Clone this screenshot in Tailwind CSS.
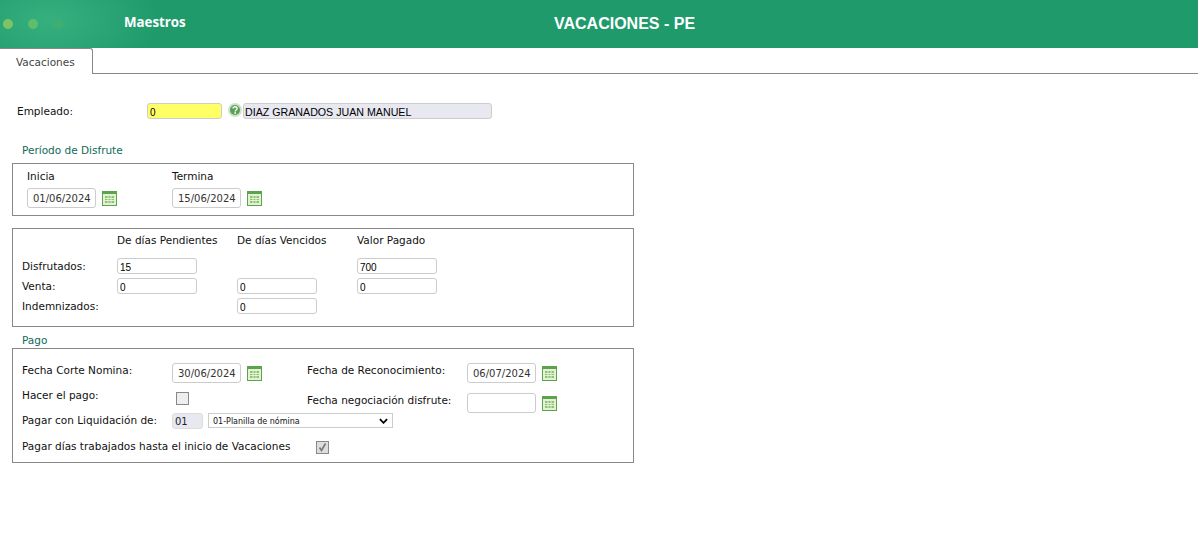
<!DOCTYPE html>
<html lang="es">
<head>
  <meta charset="UTF-8">
  <title>Vacaciones - PE</title>
  <script src="https://cdn.jsdelivr.net/npm/@tailwindcss/browser@4"></script>
</head>
<body class="bg-white h-[538px] overflow-hidden font-['DejaVu_Sans',sans-serif] text-[10.5px] text-[#111]">

  <!-- encabezado -->
  <div class="relative h-12 bg-[#1f9a6b] bg-[radial-gradient(ellipse_110px_60px_at_50px_20px,#37b07f,#1f9a6b)] flex items-center">
    <div class="flex gap-[15px] pl-[3px] w-[124px] -mt-[1px]">
      <span class="w-[10px] h-[10px] rounded-full bg-[#7cc465]"></span>
      <span class="w-[10px] h-[10px] rounded-full bg-[#5fbd6c]"></span>
      <span class="w-[10px] h-[10px] rounded-full bg-[#3fae70]"></span>
    </div>
    <span class="font-['Open_Sans',sans-serif] font-bold text-[13.3px] text-white -mt-[3px]">Maestros</span>
    <span class="absolute left-[554px] top-[14px] font-['Liberation_Sans',sans-serif] font-bold text-base leading-[19px] text-white">VACACIONES - PE</span>
  </div>

  <!-- pestañas -->
  <div class="h-[26px] border-b border-[#888]">
    <div class="w-[93px] h-[26px] bg-white border-t border-r border-[#888] rounded-tr-[3px] pl-4 pt-[6px] leading-[14px] text-[#444]">Vacaciones</div>
  </div>

  <form class="w-[634px] pl-3">
    <!-- empleado -->
    <div class="flex items-start h-[16px] mt-[29px] pl-[5px]">
      <span class="w-[130px] leading-[16px]">Empleado:</span>
      <input type="text" value="0" class="w-[75px] h-4 bg-[#ffff66] border border-[#ccc] rounded-[3px] px-[2px] pt-[2px] text-[10px] text-black font-['Liberation_Sans',sans-serif]">
      <span class="w-[14px] h-[14px] ml-[6px] mr-[1px]">
        <svg viewBox="0 0 14 14" class="w-[14px] h-[14px]"><circle cx="7" cy="7" r="7" fill="#cfe3ca"/><circle cx="7" cy="7" r="5" fill="#5a9f55"/><path d="M5 5.6C5 4.4 6 3.8 7 3.8s2.1.6 2.1 1.7c0 1.4-1.9 1.5-1.9 2.9" fill="none" stroke="#fff" stroke-width="1.4"/><rect x="6.4" y="9.2" width="1.6" height="1.6" fill="#fff"/></svg>
      </span>
      <input type="text" readonly value="DIAZ GRANADOS JUAN MANUEL" class="w-[249px] h-4 bg-[#e8e8f0] border border-[#ccc] rounded-[3px] px-[1px] pt-[2px] text-[10.67px] text-black font-['Liberation_Sans',sans-serif]">
    </div>

    <!-- período -->
    <div class="pl-[10px] mt-[24px] h-[20px] leading-[14px] text-[#0f6b58]">Período de Disfrute</div>
    <div class="h-[53px] border border-[#888] flex pl-[14px] pt-[5px]">
      <div class="w-[145px]">
        <div class="leading-[14px]">Inicia</div>
        <div class="flex items-center gap-[6px] mt-[5px]">
          <input type="text" value="01/06/2024" class="w-[69px] h-[20px] border border-[#ccc] rounded-[3px] pl-[5px] text-[10px] text-[#333]">
          <svg viewBox="0 0 15 15" class="w-[15px] h-[15px] mt-[1px]"><rect x="0.5" y="0.5" width="14" height="14" fill="#e3f2d5" stroke="#5da34e"/><rect x="1" y="1" width="13" height="2" fill="#5da34e"/><rect x="3" y="5" width="9" height="7" fill="#8fc46f"/><path d="M6 5v7M9 5v7M3 7.5h9M3 9.5h9" stroke="#f4faee" stroke-width="0.8"/></svg>
        </div>
      </div>
      <div>
        <div class="leading-[14px]">Termina</div>
        <div class="flex items-center gap-[6px] mt-[5px]">
          <input type="text" value="15/06/2024" class="w-[69px] h-[20px] border border-[#ccc] rounded-[3px] pl-[5px] text-[10px] text-[#333]">
          <svg viewBox="0 0 15 15" class="w-[15px] h-[15px] mt-[1px]"><rect x="0.5" y="0.5" width="14" height="14" fill="#e3f2d5" stroke="#5da34e"/><rect x="1" y="1" width="13" height="2" fill="#5da34e"/><rect x="3" y="5" width="9" height="7" fill="#8fc46f"/><path d="M6 5v7M9 5v7M3 7.5h9M3 9.5h9" stroke="#f4faee" stroke-width="0.8"/></svg>
        </div>
      </div>
    </div>

    <!-- días -->
    <div class="h-[99px] mt-[12px] border border-[#888] pl-[9px] pt-[5px] grid grid-cols-[95px_120px_120px_120px] grid-rows-[24px_20px_20px_20px] items-start leading-[14px]">
      <span></span><span class="-mt-[1px]">De días Pendientes</span><span class="-mt-[1px]">De días Vencidos</span><span class="-mt-[1px]">Valor Pagado</span>

      <span class="pt-[1px]">Disfrutados:</span>
      <input type="text" value="15" class="w-20 h-4 border border-[#ccc] rounded-[3px] pl-[2px] pt-[2px] text-[10px] font-['Liberation_Sans',sans-serif] text-black">
      <span></span>
      <input type="text" value="700" class="w-20 h-4 border border-[#ccc] rounded-[3px] pl-[2px] pt-[2px] text-[10px] font-['Liberation_Sans',sans-serif] text-black">

      <span class="pt-[1px]">Venta:</span>
      <input type="text" value="0" class="w-20 h-4 border border-[#ccc] rounded-[3px] pl-[2px] pt-[2px] text-[10px] font-['Liberation_Sans',sans-serif] text-black">
      <input type="text" value="0" class="w-20 h-4 border border-[#ccc] rounded-[3px] pl-[2px] pt-[2px] text-[10px] font-['Liberation_Sans',sans-serif] text-black">
      <input type="text" value="0" class="w-20 h-4 border border-[#ccc] rounded-[3px] pl-[2px] pt-[2px] text-[10px] font-['Liberation_Sans',sans-serif] text-black">

      <span class="pt-[1px]">Indemnizados:</span>
      <span></span>
      <input type="text" value="0" class="w-20 h-4 border border-[#ccc] rounded-[3px] pl-[2px] pt-[2px] text-[10px] font-['Liberation_Sans',sans-serif] text-black">
      <span></span>
    </div>

    <!-- pago -->
    <div class="pl-[10px] mt-[6px] h-[15px] leading-[14px] text-[#0f6b58]">Pago</div>
    <div class="h-[115px] border border-[#888] pl-[9px] pt-[14px] leading-[14px]">
      <div class="grid grid-cols-[150px_135px_160px_1fr] grid-rows-[30px_20px] items-start">
        <span>Fecha Corte Nomina:</span>
        <div class="flex items-center gap-[6px]">
          <input type="text" value="30/06/2024" class="w-[69px] h-[20px] border border-[#ccc] rounded-[3px] pl-[5px] text-[10px] text-[#333]">
          <svg viewBox="0 0 15 15" class="w-[15px] h-[15px] mt-[1px]"><rect x="0.5" y="0.5" width="14" height="14" fill="#e3f2d5" stroke="#5da34e"/><rect x="1" y="1" width="13" height="2" fill="#5da34e"/><rect x="3" y="5" width="9" height="7" fill="#8fc46f"/><path d="M6 5v7M9 5v7M3 7.5h9M3 9.5h9" stroke="#f4faee" stroke-width="0.8"/></svg>
        </div>
        <span>Fecha de Reconocimiento:</span>
        <div class="flex items-center gap-[6px]">
          <input type="text" value="06/07/2024" class="w-[69px] h-[20px] border border-[#ccc] rounded-[3px] pl-[5px] text-[10px] text-[#333]">
          <svg viewBox="0 0 15 15" class="w-[15px] h-[15px] mt-[1px]"><rect x="0.5" y="0.5" width="14" height="14" fill="#e3f2d5" stroke="#5da34e"/><rect x="1" y="1" width="13" height="2" fill="#5da34e"/><rect x="3" y="5" width="9" height="7" fill="#8fc46f"/><path d="M6 5v7M9 5v7M3 7.5h9M3 9.5h9" stroke="#f4faee" stroke-width="0.8"/></svg>
        </div>

        <span class="-mt-[5px]">Hacer el pago:</span>
        <div class="pl-1 -mt-[1px]"><input type="checkbox" class="block appearance-none w-[13px] h-[13px] border border-[#888] bg-[#eee]"></div>
        <span>Fecha negociación disfrute:</span>
        <div class="flex items-center gap-[6px]">
          <input type="text" class="w-[69px] h-[20px] border border-[#ccc] rounded-[3px] pl-[5px] text-[10px] text-[#333]">
          <svg viewBox="0 0 15 15" class="w-[15px] h-[15px] mt-[1px]"><rect x="0.5" y="0.5" width="14" height="14" fill="#e3f2d5" stroke="#5da34e"/><rect x="1" y="1" width="13" height="2" fill="#5da34e"/><rect x="3" y="5" width="9" height="7" fill="#8fc46f"/><path d="M6 5v7M9 5v7M3 7.5h9M3 9.5h9" stroke="#f4faee" stroke-width="0.8"/></svg>
        </div>
      </div>
      <div class="flex items-start h-[24px]">
        <span class="w-[150px]">Pagar con Liquidación de:</span>
        <input type="text" readonly value="01" class="w-[31px] h-4 bg-[#e8e8f0] border border-[#ddd] rounded-[3px] pl-[2px] pt-[1px] text-[10px] text-[#222]">
        <div class="relative w-[185px] h-[15px] ml-[5px] border border-[#ccc] pl-1 pt-[1px] text-[8px] leading-[13px]">01-Planilla de nómina
          <svg viewBox="0 0 10 6" class="absolute right-[4px] top-[4px] w-[9px] h-[6px]"><path d="M1 1l4 4 4-4" fill="none" stroke="#000" stroke-width="2"/></svg>
        </div>
      </div>
      <div class="flex items-start">
        <span class="w-[294px] pt-[2px]">Pagar días trabajados hasta el inicio de Vacaciones</span>
        <span class="w-[13px] h-[13px] mt-[4px] border border-[#888] bg-[#ddd] flex items-center justify-center">
          <svg viewBox="0 0 11 11" class="w-[11px] h-[11px]"><path d="M2.5 5.5l2 3 4-7" fill="none" stroke="#777" stroke-width="1.6"/></svg>
        </span>
      </div>
    </div>
  </form>
</body>
</html>
